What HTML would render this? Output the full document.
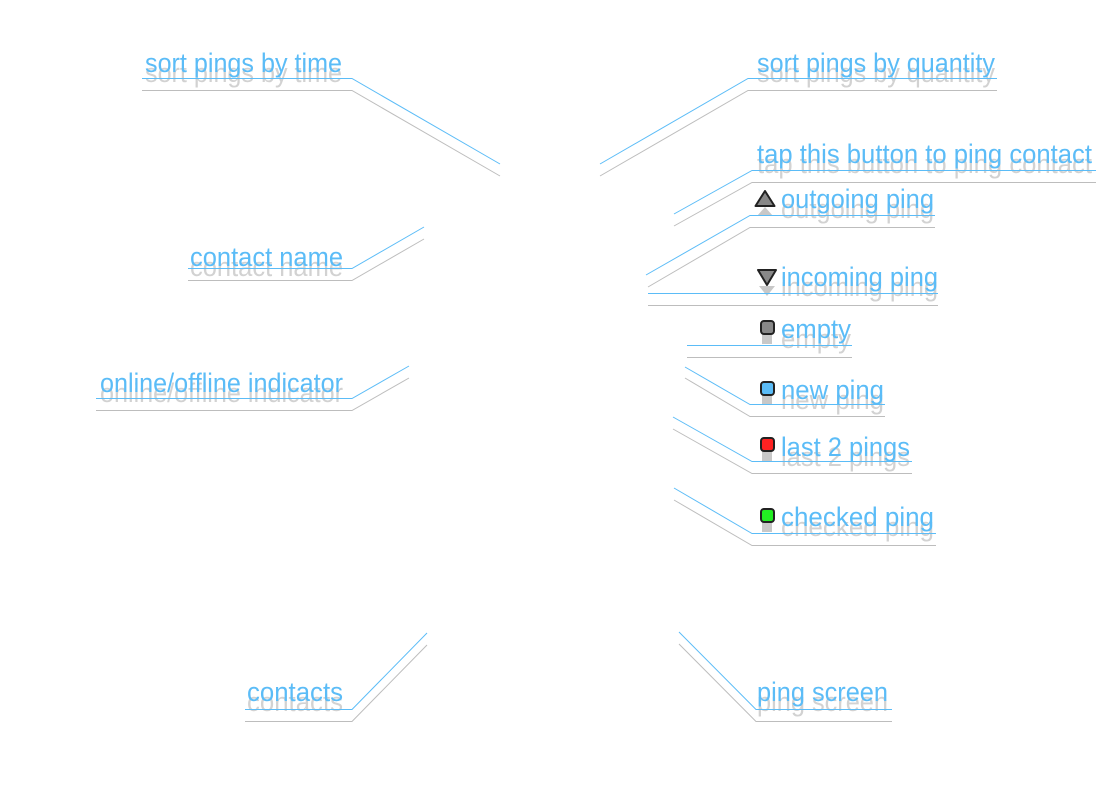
<!DOCTYPE html>
<html><head><meta charset="utf-8"><style>
html,body{margin:0;padding:0;background:#fff;width:1096px;height:800px;overflow:hidden}
svg text{font-family:"Liberation Sans",sans-serif;font-size:27px;}
.b{fill:#5bbcf7}.g{fill:#d2d2d2}
.lb{fill:none;stroke:#5bbcf7;stroke-width:1}
.lg{fill:none;stroke:#bdbdbd;stroke-width:1}
</style></head><body>
<svg width="1096" height="800" xmlns="http://www.w3.org/2000/svg">
<text class="g" x="145" y="82" textLength="197" lengthAdjust="spacingAndGlyphs">sort pings by time</text>
<text class="b" x="145" y="72" textLength="197" lengthAdjust="spacingAndGlyphs">sort pings by time</text>
<polyline class="lb" points="142,78.5 352,78.5 500,164"/>
<polyline class="lg" points="142,90.5 352,90.5 500,176"/>

<text class="g" x="190" y="276" textLength="153" lengthAdjust="spacingAndGlyphs">contact name</text>
<text class="b" x="190" y="266" textLength="153" lengthAdjust="spacingAndGlyphs">contact name</text>
<polyline class="lb" points="188,268.5 352,268.5 424,227"/>
<polyline class="lg" points="188,280.5 352,280.5 424,239"/>

<text class="g" x="100" y="402" textLength="243" lengthAdjust="spacingAndGlyphs">online/offline indicator</text>
<text class="b" x="100" y="392" textLength="243" lengthAdjust="spacingAndGlyphs">online/offline indicator</text>
<polyline class="lb" points="96,398.5 352,398.5 409,366"/>
<polyline class="lg" points="96,410.5 352,410.5 409,378"/>

<text class="g" x="247" y="711" textLength="96" lengthAdjust="spacingAndGlyphs">contacts</text>
<text class="b" x="247" y="701" textLength="96" lengthAdjust="spacingAndGlyphs">contacts</text>
<polyline class="lb" points="245,709.5 352,709.5 427,633"/>
<polyline class="lg" points="245,721.5 352,721.5 427,645"/>

<text class="g" x="757" y="82" textLength="238" lengthAdjust="spacingAndGlyphs">sort pings by quantity</text>
<text class="b" x="757" y="72" textLength="238" lengthAdjust="spacingAndGlyphs">sort pings by quantity</text>
<polyline class="lb" points="600,164 748,78.5 997,78.5"/>
<polyline class="lg" points="600,176 748,90.5 997,90.5"/>

<text class="g" x="757" y="173" textLength="335" lengthAdjust="spacingAndGlyphs">tap this button to ping contact</text>
<text class="b" x="757" y="163" textLength="335" lengthAdjust="spacingAndGlyphs">tap this button to ping contact</text>
<polyline class="lb" points="674,214 752,170.5 1096,170.5"/>
<polyline class="lg" points="674,226 752,182.5 1096,182.5"/>

<path d="M757,216 L765,207 L773,216 Z" fill="#c8c8c8"/>
<path d="M765,191 L774.5,206 L755.5,206 Z" fill="#888" stroke="#222" stroke-width="2" stroke-linejoin="round"/>
<text class="g" x="781" y="218" textLength="153" lengthAdjust="spacingAndGlyphs">outgoing ping</text>
<text class="b" x="781" y="208" textLength="153" lengthAdjust="spacingAndGlyphs">outgoing ping</text>
<polyline class="lb" points="646,275 750,215.5 935,215.5"/>
<polyline class="lg" points="648,287 750,227.5 935,227.5"/>

<path d="M759,286 L767,296 L775,286 Z" fill="#c8c8c8"/>
<path d="M758,270 L776,270 L767,285 Z" fill="#888" stroke="#222" stroke-width="2" stroke-linejoin="round"/>
<text class="g" x="781" y="296" textLength="157" lengthAdjust="spacingAndGlyphs">incoming ping</text>
<text class="b" x="781" y="286" textLength="157" lengthAdjust="spacingAndGlyphs">incoming ping</text>
<polyline class="lb" points="648,293.5 938,293.5"/>
<polyline class="lg" points="648,305.5 938,305.5"/>

<rect x="762" y="334" width="10" height="10" fill="#c8c8c8"/>
<rect x="761" y="321" width="13" height="13" rx="3" fill="#888" stroke="#222" stroke-width="2"/>
<text class="g" x="781" y="348" textLength="70" lengthAdjust="spacingAndGlyphs">empty</text>
<text class="b" x="781" y="338" textLength="70" lengthAdjust="spacingAndGlyphs">empty</text>
<polyline class="lb" points="687,345.5 852,345.5"/>
<polyline class="lg" points="687,357.5 852,357.5"/>

<rect x="762" y="395" width="10" height="10" fill="#c8c8c8"/>
<rect x="761" y="382" width="13" height="13" rx="3" fill="#5bbcf7" stroke="#222" stroke-width="2"/>
<text class="g" x="781" y="409" textLength="103" lengthAdjust="spacingAndGlyphs">new ping</text>
<text class="b" x="781" y="399" textLength="103" lengthAdjust="spacingAndGlyphs">new ping</text>
<polyline class="lb" points="685,367 750,404.5 885,404.5"/>
<polyline class="lg" points="685,378 750,416.5 885,416.5"/>

<rect x="762" y="451" width="10" height="10" fill="#c8c8c8"/>
<rect x="761" y="438" width="13" height="13" rx="3" fill="#f22" stroke="#222" stroke-width="2"/>
<text class="g" x="781" y="466" textLength="129" lengthAdjust="spacingAndGlyphs">last 2 pings</text>
<text class="b" x="781" y="456" textLength="129" lengthAdjust="spacingAndGlyphs">last 2 pings</text>
<polyline class="lb" points="673,417 752,461.5 912,461.5"/>
<polyline class="lg" points="673,429 752,473.5 912,473.5"/>

<rect x="762" y="522" width="10" height="10" fill="#c8c8c8"/>
<rect x="761" y="509" width="13" height="13" rx="3" fill="#2e2" stroke="#222" stroke-width="2"/>
<text class="g" x="781" y="536" textLength="153" lengthAdjust="spacingAndGlyphs">checked ping</text>
<text class="b" x="781" y="526" textLength="153" lengthAdjust="spacingAndGlyphs">checked ping</text>
<polyline class="lb" points="674,488 752,533.5 936,533.5"/>
<polyline class="lg" points="674,500 752,545.5 936,545.5"/>

<text class="g" x="757" y="711" textLength="131" lengthAdjust="spacingAndGlyphs">ping screen</text>
<text class="b" x="757" y="701" textLength="131" lengthAdjust="spacingAndGlyphs">ping screen</text>
<polyline class="lb" points="679,632 756,709.5 892,709.5"/>
<polyline class="lg" points="679,644 756,721.5 892,721.5"/>
</svg>
</body></html>
